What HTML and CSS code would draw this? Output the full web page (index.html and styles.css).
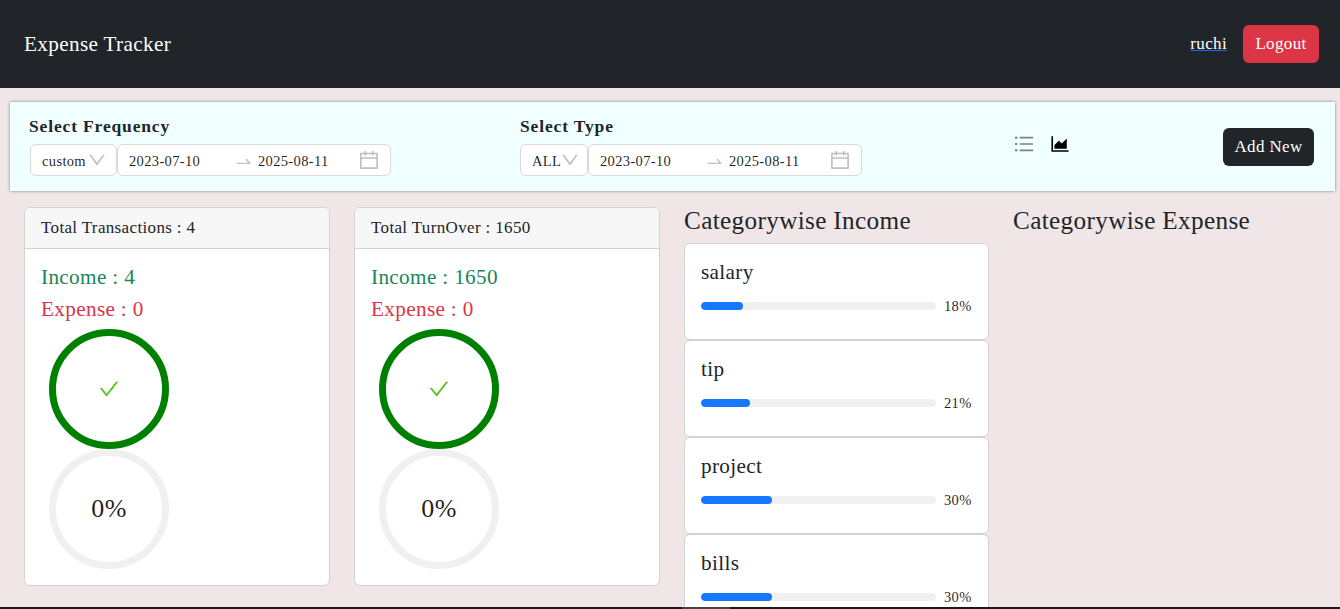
FILE: index.html
```html
<!DOCTYPE html>
<html lang="en">
<head>
    <meta charset="UTF-8">
    <meta name="viewport" content="width=device-width, initial-scale=1.0">
    <title>Expense Tracker</title>
    <link rel="stylesheet" href="styles.css">
</head>
<body>
    <nav class="navbar">
        <span class="brand">Expense Tracker</span>
        <div class="nav-right">
            <a class="user-link" href="#">ruchi</a>
            <button class="btn btn-logout">Logout</button>
        </div>
    </nav>

    <main class="content">
        <section class="filters">
            <div class="filter-group">
                <h6>Select Frequency</h6>
                <div class="filter-controls">
                    <div class="select select-frequency">
                        <span>custom</span>
                        <svg class="icon-down" viewBox="64 64 896 896"><path d="M884 256h-75c-5.1 0-9.9 2.5-12.9 6.6L512 654.2 227.9 262.6c-3-4.1-7.8-6.6-12.9-6.6h-75c-6.5 0-10.3 7.4-6.5 12.7l352.6 486.1c12.8 17.6 39 17.6 51.7 0l352.6-486.1c3.9-5.3.1-12.7-6.4-12.7z"/></svg>
                    </div>
                    <div class="range">
                        <span class="range-date">2023-07-10</span>
                        <svg class="icon-swap" viewBox="64 64 896 896"><path d="M873.1 596.2l-164-208A32 32 0 00684 376h-64.8c-6.7 0-10.4 7.7-6.3 13l144.3 183H152c-4.4 0-8 3.6-8 8v60c0 4.4 3.6 8 8 8h695.9c26.8 0 41.7-30.8 25.2-51.8z"/></svg>
                        <span class="range-date range-end">2025-08-11</span>
                        <svg class="icon-calendar" viewBox="64 64 896 896"><path d="M880 184H712v-64c0-4.4-3.6-8-8-8h-56c-4.4 0-8 3.6-8 8v64H384v-64c0-4.4-3.6-8-8-8h-56c-4.4 0-8 3.6-8 8v64H144c-17.7 0-32 14.3-32 32v664c0 17.7 14.3 32 32 32h736c17.7 0 32-14.3 32-32V216c0-17.7-14.3-32-32-32zm-40 656H184V460h656v380zM184 392V256h128v48c0 4.4 3.6 8 8 8h56c4.4 0 8-3.6 8-8v-48h256v48c0 4.4 3.6 8 8 8h56c4.4 0 8-3.6 8-8v-48h128v136H184z"/></svg>
                    </div>
                </div>
            </div>

            <div class="filter-group filter-type">
                <h6>Select Type</h6>
                <div class="filter-controls">
                    <div class="select select-type">
                        <span>ALL</span>
                        <svg class="icon-down" viewBox="64 64 896 896"><path d="M884 256h-75c-5.1 0-9.9 2.5-12.9 6.6L512 654.2 227.9 262.6c-3-4.1-7.8-6.6-12.9-6.6h-75c-6.5 0-10.3 7.4-6.5 12.7l352.6 486.1c12.8 17.6 39 17.6 51.7 0l352.6-486.1c3.9-5.3.1-12.7-6.4-12.7z"/></svg>
                    </div>
                    <div class="range">
                        <span class="range-date">2023-07-10</span>
                        <svg class="icon-swap" viewBox="64 64 896 896"><path d="M873.1 596.2l-164-208A32 32 0 00684 376h-64.8c-6.7 0-10.4 7.7-6.3 13l144.3 183H152c-4.4 0-8 3.6-8 8v60c0 4.4 3.6 8 8 8h695.9c26.8 0 41.7-30.8 25.2-51.8z"/></svg>
                        <span class="range-date range-end">2025-08-11</span>
                        <svg class="icon-calendar" viewBox="64 64 896 896"><path d="M880 184H712v-64c0-4.4-3.6-8-8-8h-56c-4.4 0-8 3.6-8 8v64H384v-64c0-4.4-3.6-8-8-8h-56c-4.4 0-8 3.6-8 8v64H144c-17.7 0-32 14.3-32 32v664c0 17.7 14.3 32 32 32h736c17.7 0 32-14.3 32-32V216c0-17.7-14.3-32-32-32zm-40 656H184V460h656v380zM184 392V256h128v48c0 4.4 3.6 8 8 8h56c4.4 0 8-3.6 8-8v-48h256v48c0 4.4 3.6 8 8 8h56c4.4 0 8-3.6 8-8v-48h128v136H184z"/></svg>
                    </div>
                </div>
            </div>

            <div class="view-switch">
                <svg class="icon-list" viewBox="64 64 896 896"><path d="M912 192H328c-4.4 0-8 3.6-8 8v56c0 4.4 3.6 8 8 8h584c4.4 0 8-3.6 8-8v-56c0-4.4-3.6-8-8-8zm0 284H328c-4.4 0-8 3.6-8 8v56c0 4.4 3.6 8 8 8h584c4.4 0 8-3.6 8-8v-56c0-4.4-3.6-8-8-8zm0 284H328c-4.4 0-8 3.6-8 8v56c0 4.4 3.6 8 8 8h584c4.4 0 8-3.6 8-8v-56c0-4.4-3.6-8-8-8zM104 228a56 56 0 10112 0 56 56 0 10-112 0zm0 284a56 56 0 10112 0 56 56 0 10-112 0zm0 284a56 56 0 10112 0 56 56 0 10-112 0z"/></svg>
                <svg class="icon-area" viewBox="64 64 896 896"><path d="M888 792H200V168c0-4.4-3.6-8-8-8h-56c-4.4 0-8 3.6-8 8v688c0 4.4 3.6 8 8 8h752c4.4 0 8-3.6 8-8v-56c0-4.4-3.6-8-8-8zm-616-64h536c4.4 0 8-3.6 8-8V284c0-7.2-8.7-10.7-13.7-5.7L592 488.6l-125.4-124a8.03 8.03 0 00-11.3 0l-189 189.6a7.87 7.87 0 00-2.3 5.6V720c0 4.4 3.6 8 8 8z"/></svg>
            </div>

            <button class="btn btn-add">Add New</button>
        </section>

        <section class="report">
            <div class="card">
                <div class="card-header">Total Transactions : 4</div>
                <div class="card-body">
                    <h5 class="text-income">Income : 4</h5>
                    <h5 class="text-expense">Expense : 0</h5>
                    <div class="ring ring-done">
                        <svg class="icon-check" viewBox="64 64 896 896"><path d="M912 190h-69.9c-9.8 0-19.1 4.5-25.1 12.2L404.7 724.5 207 474a32 32 0 00-25.1-12.2H112c-6.7 0-10.4 7.7-6.3 13l273.9 347c12.8 16.2 37.4 16.2 50.3 0l488.4-619.8c4.1-5.3.4-12.8-6.3-12.8z"/></svg>
                    </div>
                    <div class="ring">0%</div>
                </div>
            </div>

            <div class="card">
                <div class="card-header">Total TurnOver : 1650</div>
                <div class="card-body">
                    <h5 class="text-income">Income : 1650</h5>
                    <h5 class="text-expense">Expense : 0</h5>
                    <div class="ring ring-done">
                        <svg class="icon-check" viewBox="64 64 896 896"><path d="M912 190h-69.9c-9.8 0-19.1 4.5-25.1 12.2L404.7 724.5 207 474a32 32 0 00-25.1-12.2H112c-6.7 0-10.4 7.7-6.3 13l273.9 347c12.8 16.2 37.4 16.2 50.3 0l488.4-619.8c4.1-5.3.4-12.8-6.3-12.8z"/></svg>
                    </div>
                    <div class="ring">0%</div>
                </div>
            </div>

            <div class="category">
                <h4>Categorywise Income</h4>
                <div class="category-card">
                    <h5>salary</h5>
                    <div class="progress">
                        <div class="progress-track"><div class="progress-fill" style="width: 18%"></div></div>
                        <span class="progress-text">18%</span>
                    </div>
                </div>
                <div class="category-card">
                    <h5>tip</h5>
                    <div class="progress">
                        <div class="progress-track"><div class="progress-fill" style="width: 21%"></div></div>
                        <span class="progress-text">21%</span>
                    </div>
                </div>
                <div class="category-card">
                    <h5>project</h5>
                    <div class="progress">
                        <div class="progress-track"><div class="progress-fill" style="width: 30%"></div></div>
                        <span class="progress-text">30%</span>
                    </div>
                </div>
                <div class="category-card">
                    <h5>bills</h5>
                    <div class="progress">
                        <div class="progress-track"><div class="progress-fill" style="width: 30%"></div></div>
                        <span class="progress-text">30%</span>
                    </div>
                </div>
            </div>

            <div class="category">
                <h4>Categorywise Expense</h4>
            </div>
        </section>
    </main>

    <div class="bottom-strip"><div class="bottom-thumb"></div></div>
</body>
</html>
```

FILE: styles.css
```css
html, body {
    margin: 0;
    padding: 0;
    height: 609px;
    overflow: hidden;
}
body {
    background: #f0e6e8;
    color: #212529;
    font-family: "Liberation Serif", "Times New Roman", serif;
    font-size: 17px;
    letter-spacing: 0.35px;
}
h4, h5, h6 {
    margin: 0;
    font-weight: 400;
}

/* navbar */
.navbar {
    height: 88px;
    background: #212529;
    display: flex;
    align-items: center;
    justify-content: space-between;
    padding: 0 21px 0 24px;
}
.brand {
    color: #fff;
    font-size: 21.2px;
}
.nav-right {
    display: flex;
    align-items: center;
    gap: 16px;
}
.user-link {
    color: #fff;
    text-decoration: underline;
    text-decoration-color: #0d6efd;
}
.btn {
    height: 38px;
    border: 0;
    border-radius: 6px;
    color: #fff;
    font: inherit;
    letter-spacing: inherit;
    padding: 0;
}
.btn-logout {
    width: 76px;
    background: #dc3545;
}
.btn-add {
    width: 91px;
    background: #212529;
    margin-left: auto;
}

/* filter bar */
.content {
    height: 519px;
    overflow: hidden;
    padding-top: 14px;
    box-sizing: border-box;
}
.filters {
    margin: 0 5px 0 10px;
    height: 89px;
    box-sizing: border-box;
    background: #f0ffff;
    box-shadow: 0 0 3px #808080;
    display: flex;
    align-items: center;
    padding: 0 21px 0 19px;
}
.filter-group h6 {
    font-size: 17.5px;
    font-weight: 700;
    line-height: 19px;
    letter-spacing: 0.85px;
    margin-bottom: 8px;
}
.filter-type {
    margin-left: 129px;
}
.filter-controls {
    display: flex;
    margin-left: 1px;
}
.filter-type .filter-controls {
    margin-left: 0;
}
.select, .range {
    height: 32px;
    box-sizing: border-box;
    background: #fff;
    border: 1px solid #d9d9d9;
    border-radius: 6px;
    display: flex;
    align-items: center;
    font-size: 14.5px;
    color: rgba(0, 0, 0, 0.88);
}
.select span, .range span {
    padding-top: 2px;
}
.select {
    padding-left: 11px;
    justify-content: space-between;
    padding-right: 10px;
}
.select-frequency {
    width: 87px;
}
.select-type {
    width: 68px;
}
.icon-down {
    width: 18px;
    height: 18px;
    fill: #bfbfbf;
    flex-shrink: 0;
}
.range {
    width: 274px;
    padding: 0 11px;
}
.range-date {
    width: 107px;
}
.range-end {
    margin-left: 6px;
    width: 102px;
}
.icon-swap {
    width: 17px;
    height: 17px;
    margin-top: 3px;
    fill: #bfbfbf;
    flex-shrink: 0;
}
.icon-calendar {
    width: 20px;
    height: 20px;
    fill: #bfbfbf;
    flex-shrink: 0;
}
.view-switch {
    margin-left: 152px;
    display: flex;
    gap: 16px;
    align-items: center;
    margin-top: -5px;
}
.icon-list {
    width: 20px;
    height: 20px;
    fill: #808080;
}
.icon-area {
    width: 20px;
    height: 20px;
    fill: #000;
}

/* report columns */
.report {
    display: grid;
    grid-template-columns: 306px 306px 305px 306px;
    column-gap: 24px;
    padding: 16px 0 0 24px;
    align-items: start;
}
.card {
    background: #fff;
    border: 1px solid #d3d3d3;
    border-radius: 6px;
    overflow: hidden;
}
.card-header {
    height: 41px;
    box-sizing: border-box;
    padding: 0 16px;
    display: flex;
    align-items: center;
    background: #f7f7f7;
    border-bottom: 1px solid #d3d3d3;
}
.card-body {
    padding: 16px;
}
.card-body h5 {
    font-size: 21.2px;
    line-height: 24px;
    margin-bottom: 8px;
}
.text-income {
    color: #198754;
}
.text-expense {
    color: #dc3545;
}
.ring {
    width: 120px;
    height: 120px;
    box-sizing: border-box;
    margin-left: 8px;
    border: 7px solid #f0f0f0;
    border-radius: 50%;
    display: flex;
    align-items: center;
    justify-content: center;
    font-size: 26px;
    color: rgba(0, 0, 0, 0.88);
}
.ring-done {
    border-color: #008000;
}
.icon-check {
    width: 20px;
    height: 20px;
    fill: #52c41a;
}
.category h4 {
    font-size: 25.2px;
    line-height: 28px;
    margin-bottom: 8px;
}
.category-card {
    height: 97px;
    box-sizing: border-box;
    background: #fff;
    border: 1px solid #d3d3d3;
    border-radius: 6px;
    padding: 16px;
}
.category-card h5 {
    font-size: 21.2px;
    line-height: 24px;
    margin-bottom: 11px;
}
.progress {
    display: flex;
    align-items: center;
    height: 22px;
}
.progress-track {
    width: 235px;
    height: 8px;
    border-radius: 4px;
    background: #f0f0f0;
    overflow: hidden;
}
.progress-fill {
    height: 100%;
    border-radius: 4px;
    background: #1677ff;
}
.progress-text {
    margin-left: 8px;
    font-size: 14.5px;
    color: rgba(0, 0, 0, 0.88);
}

/* thin dark line along the window's bottom edge */
.bottom-strip {
    height: 2px;
    background: #1a1a1a;
    padding-left: 682px;
}
.bottom-thumb {
    width: 48px;
    height: 2px;
    background: #444;
}
```
